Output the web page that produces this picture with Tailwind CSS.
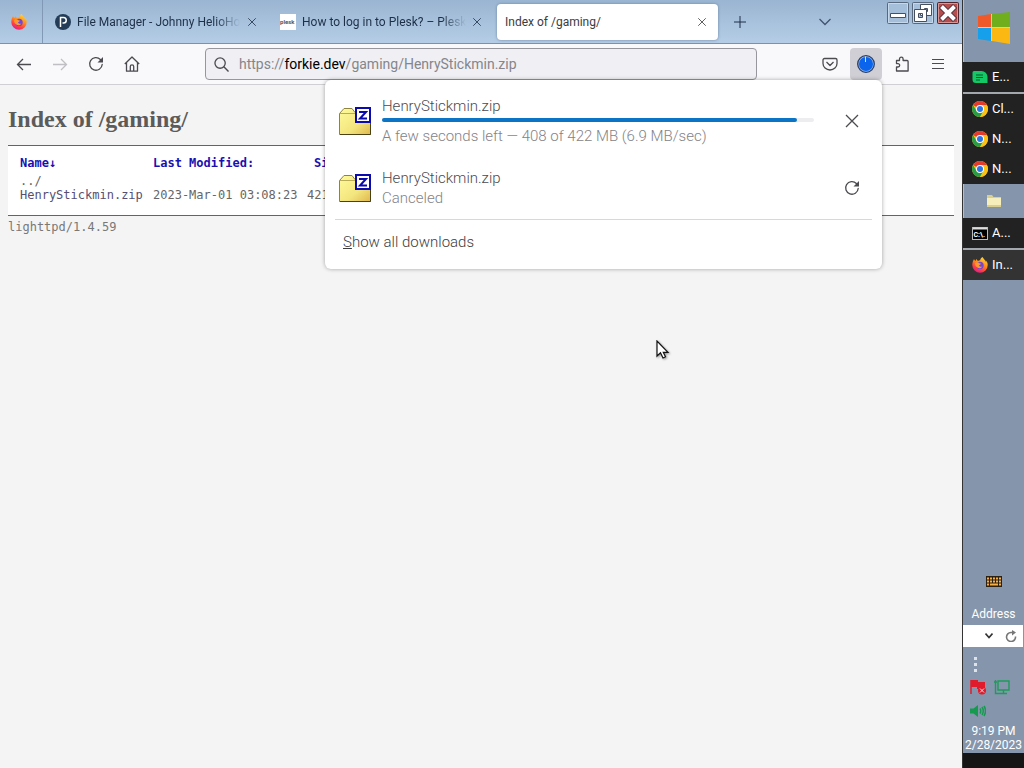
<!DOCTYPE html>
<html lang="en">
<head>
  <meta charset="UTF-8">
  <title>Index of /gaming/</title>
  <meta name="viewport" content="width=device-width, initial-scale=1.0">
  <script src="https://cdn.jsdelivr.net/npm/@tailwindcss/browser@4"></script>
</head>
<body class="flex h-screen overflow-hidden bg-[#f4f4f4] font-['Roboto',sans-serif] text-[#4b4b50]">

  <!-- Shared icons -->
  <svg class="absolute size-0">
    <defs>
      <linearGradient id="ffg" x1="0.8" y1="0" x2="0.3" y2="1">
        <stop offset="0" stop-color="#ffdf3a"/><stop offset="0.45" stop-color="#ff8a1e"/><stop offset="0.75" stop-color="#ff3c47"/><stop offset="1" stop-color="#e3198c"/>
      </linearGradient>
      <linearGradient id="folderg" x1="0" y1="0" x2="1" y2="1">
        <stop offset="0" stop-color="#fffb9c"/><stop offset="0.6" stop-color="#f3e57e"/><stop offset="1" stop-color="#e0b84e"/>
      </linearGradient>
    </defs>
    <symbol id="firefox" viewBox="0 0 16 16">
      <path fill="url(#ffg)" d="M15.3 5.6c-.4-.9-1.1-1.8-1.7-2.1.4.8.7 1.6.8 2.2C13.5 3.4 12 2.500 10.8.5L10.4 0C9 .8 8.300 2.200 8.100 3.300c-.8 0-1.500.3-2.100.6C5.200 3.400 4.800 2.800 4.400 2c-.5.5-.8 1.300-.8 2-.9-.4-1.500-1.300-1.500-2C1 3.400.3 5.800.3 8.200A7.700 7.700 0 0 0 15.700 8c0-.8-.1-1.700-.4-2.400z"/>
      <circle cx="8" cy="8.400" r="3.700" fill="#7146d8"/>
      <path fill="#ff9a28" d="M3 6.500c1.600-1.500 3.400-1.400 4.300-.3.700.2 1.400.2 1.700.6-.3.900-1.700.9-1.900 1.700.1 1 1.500 1.600 3.200.9-.8 1.700-3.100 2.400-5 1.200C3.900 9.700 3.300 8.300 3 6.500z"/>
    </symbol>
    <symbol id="chrome" viewBox="0 0 16 16">
      <circle cx="8" cy="8" r="8" fill="#fbc116"/>
      <path fill="#e33b2e" d="M8 8 1.100 4A8 8 0 0 1 14.900 4H8z"/>
      <path fill="#269e47" d="M1.100 4A8 8 0 0 0 8 16l3.500-6L8 8 4.500 10z"/>
      <path fill="#fbc116" d="M14.900 4A8 8 0 0 1 8 16l3.500-6L8 4z"/>
      <circle cx="8" cy="8" r="4" fill="#fff"/><circle cx="8" cy="8" r="3" fill="#2a74e8"/>
    </symbol>
    <symbol id="close" viewBox="0 0 16 16">
      <path fill="none" stroke="currentColor" stroke-width="1.300" d="m2 2 12 12M14 2 2 14"/>
    </symbol>
    <symbol id="reload" viewBox="0 0 16 16">
      <path fill="none" stroke="currentColor" stroke-width="1.300" stroke-linecap="round" d="M14.200 8.500A6.300 6.300 0 1 1 12.400 3.500l1 1"/>
      <path fill="currentColor" d="M15 1v5.500H9.500z"/>
    </symbol>
    <symbol id="zip" viewBox="0 0 32 28">
      <path fill="url(#folderg)" stroke="#8f8340" d="M.5 6.500 5 1.500h8l3 4h15.500v22H.5z"/>
      <path fill="none" stroke="#b9ab58" d="M1 6.500h15"/>
      <path fill="none" stroke="#4a4116" d="M1 27.500h30.500V8"/>
      <path fill="#fff" stroke="#0a0aae" stroke-width="2" d="M17 1h14v14H17z"/>
      <path fill="none" stroke="#0a0aae" stroke-width="2" d="M20 5h7l-6 6.500h7"/>
    </symbol>
  </svg>

  <!-- Browser window -->
  <div class="relative flex min-w-0 flex-1 flex-col">

    <!-- Tab strip -->
    <header class="flex h-11 shrink-0 border-b border-[#84909f] bg-linear-to-b from-[#9ab5d1] to-[#b5cde7] text-xs text-[#1d3047]">
      <button aria-label="Firefox View" class="flex w-[43px] items-center justify-center border-r border-[#8199b4] pr-1">
        <svg class="size-4"><use href="#firefox"/></svg>
      </button>
      <nav class="ml-1 flex items-center gap-1">
        <div class="flex h-9 w-[221px] items-center px-2">
          <svg class="mr-1.5 size-4 shrink-0" viewBox="0 0 16 16"><circle cx="8" cy="8" r="8" fill="#243c57"/><path fill="none" stroke="#fff" stroke-width="1.500" d="M5.500 13V3.500H8.500a2.700 2.700 0 0 1 0 5.500H7.500"/></svg>
          <a href="#" class="mask-r-from-85% whitespace-nowrap">File Manager - Johnny HelioHo</a>
          <button aria-label="Close tab" class="ml-auto flex size-4 items-center justify-center"><svg class="size-2.5"><use href="#close"/></svg></button>
        </div>
        <div class="flex h-9 w-[221px] items-center px-2">
          <svg class="mr-1.5 size-4 shrink-0 bg-white" viewBox="0 0 16 16"><text x="0" y="10" font-size="6" font-weight="700" fill="#555">plesk</text></svg>
          <a href="#" class="mask-r-from-85% whitespace-nowrap">How to log in to Plesk? – Plesk</a>
          <button aria-label="Close tab" class="ml-auto flex size-4 items-center justify-center"><svg class="size-2.5"><use href="#close"/></svg></button>
        </div>
        <div class="flex h-9 w-[221px] items-center rounded bg-white px-2 text-[#3c3c40] shadow-[0_0_3px_#6a83a0]">
          <a href="#" class="truncate">Index of /gaming/</a>
          <button aria-label="Close tab" class="ml-auto flex size-4 items-center justify-center"><svg class="size-2.5"><use href="#close"/></svg></button>
        </div>
      </nav>
      <button aria-label="New tab" class="ml-3.5 flex w-4 items-center justify-center">
        <svg class="size-3" viewBox="0 0 12 12"><path stroke="currentColor" d="M6 0v12M0 6h12"/></svg>
      </button>
      <button aria-label="List all tabs" class="mr-[54px] ml-auto flex w-4 items-center justify-center text-[#40556e]">
        <svg class="h-2 w-3" viewBox="0 0 12 8"><path fill="none" stroke="currentColor" stroke-width="1.300" d="m.5 1 5.500 5.500L11.500 1"/></svg>
      </button>
      <div class="flex gap-[3px] pt-0.5 pr-[3px]">
        <button aria-label="Minimize" class="size-[22px]">
          <svg viewBox="0 0 22 22"><rect x=".5" y=".5" width="21" height="21" rx="1" fill="#a5bfdb" stroke="#58697e"/><path fill="none" stroke="#c6d8eb" d="M1.500 1.500h19v19h-19z"/><path fill="#fff" stroke="#454f60" d="M3.500 11.500h15v4h-15z"/></svg>
        </button>
        <button aria-label="Restore" class="size-[22px]">
          <svg viewBox="0 0 22 22"><rect x=".5" y=".5" width="21" height="21" rx="1" fill="#a5bfdb" stroke="#58697e"/><path fill="none" stroke="#c6d8eb" d="M1.500 1.500h19v19h-19z"/><path fill="#fff" fill-rule="evenodd" stroke="#454f60" d="M8.500 2.500h11v11h-11zM12.500 6.500v3h3v-3z"/><path fill="#fff" fill-rule="evenodd" stroke="#454f60" d="M2.500 7.500h12v12h-12zM6.500 11.500v4h4v-4z"/></svg>
        </button>
        <button aria-label="Close window" class="size-[22px]">
          <svg viewBox="0 0 22 22"><rect x=".5" y=".5" width="21" height="21" rx="1" fill="#b74e4e" stroke="#50242c"/><path fill="none" stroke="#d99694" d="M1.500 1.500h19v19h-19z"/><path stroke="#4e2e3a" stroke-width="6" d="m4 4 14 14M18 4 4 18"/><path stroke="#fff" stroke-width="4" d="m4.500 4.500 13 13M17.500 4.500l-13 13"/></svg>
        </button>
      </div>
    </header>

    <!-- Toolbar -->
    <div class="flex h-[41px] shrink-0 items-center border-b border-[#d0d0d4] bg-[#f9f9fb] px-1.5">
      <button aria-label="Back" class="flex w-9 justify-center"><svg class="size-4" viewBox="0 0 16 16"><path fill="none" stroke="currentColor" stroke-width="1.300" d="M15 8.500H1.500M7 3 1.500 8.500 7 14"/></svg></button>
      <button aria-label="Forward" class="flex w-9 justify-center text-[#c0c0c4]"><svg class="size-4" viewBox="0 0 16 16"><path fill="none" stroke="currentColor" stroke-width="1.300" d="M1 8.500h13.500M9 3l5.500 5.500L9 14"/></svg></button>
      <button aria-label="Reload" class="flex w-9 justify-center"><svg class="size-4"><use href="#reload"/></svg></button>
      <button aria-label="Home" class="flex w-9 justify-center"><svg class="size-4" viewBox="0 0 16 16"><path fill="none" stroke="currentColor" stroke-width="1.300" stroke-linejoin="round" d="m.8 8 7.200-7 7.200 7M2.500 6.500v8.700h11V6.500M6.300 15v-4.500a1.700 1.700 0 0 1 3.400 0V15"/></svg></button>
      <div role="textbox" aria-label="Address" class="mx-[55px] flex h-8 flex-1 items-center rounded border border-[#96969c] bg-[#f0f0f4] pl-2 text-sm text-[#85858b]">
        <svg class="mr-2.5 size-[15px] text-[#4b4b50]" viewBox="0 0 16 16"><circle cx="6.500" cy="6.500" r="5.500" fill="none" stroke="currentColor" stroke-width="1.400"/><path stroke="currentColor" stroke-width="1.500" d="m10.500 10.500 5 5"/></svg>
        <span>https://<span class="text-black">forkie.dev</span>/gaming/HenryStickmin.zip</span>
      </div>
      <button aria-label="Save to Pocket" class="flex w-9 justify-center"><svg class="size-4" viewBox="0 0 16 16"><path fill="none" stroke="currentColor" stroke-width="1.300" stroke-linejoin="round" d="M2.500 2.500h11a1.500 1.500 0 0 1 1.500 1.500v3.500a7 6.500 0 0 1-14 0V4a1.500 1.500 0 0 1 1.500-1.500zM4.500 6 8 9.500 11.500 6"/></svg></button>
      <button aria-label="Downloads" class="mx-0.5 flex size-8 items-center justify-center rounded bg-[#cfcfd5]"><svg class="size-[18px]" viewBox="0 0 18 18"><circle cx="9" cy="9" r="8.300" fill="#9bbcf0" stroke="#283d66" stroke-width="1.300"/><circle cx="9" cy="9" r="7" fill="#0a64ec"/><path stroke="#cfe0ff" d="M8.500 1.500V7"/></svg></button>
      <button aria-label="Extensions" class="flex w-9 justify-center"><svg class="size-4" viewBox="0 0 16 16"><path fill="none" stroke="currentColor" stroke-width="1.300" stroke-linejoin="round" d="M5.500 4.500V3a1.800 1.800 0 0 1 3.600 0v1.500h4a1 1 0 0 1 1 1v9.500H2.500v-4H4a1.700 1.700 0 0 0 0-3.400H2.500V4.500z"/></svg></button>
      <button aria-label="Menu" class="flex w-9 justify-center"><svg class="size-3" viewBox="0 0 12 12"><path stroke="currentColor" d="M0 1.500h12M0 5.500h12M0 10.500h12"/></svg></button>
    </div>

    <!-- Directory listing -->
    <main class="flex-1 px-2 pt-5 font-['DejaVu_Sans_Mono',monospace] text-[12px] leading-[14px]">
      <h1 class="mb-3 font-['Liberation_Serif',serif] text-2xl leading-7 font-bold text-[#5b5b5b]">Index of /gaming/</h1>
      <div class="border-y border-[#646464] bg-white px-3 pt-2.5 pb-[13px]">
        <table class="text-left whitespace-nowrap">
          <thead>
            <tr class="h-[18px] align-top text-[#1a0fb0]">
              <th class="w-[133px]"><a href="#">Name↓</a></th>
              <th class="w-[154px]"><a href="#">Last Modified:</a></th>
              <th class="pl-[7px]"><a href="#">Size:</a></th>
            </tr>
          </thead>
          <tbody class="text-[#666]">
            <tr><td><a href="#">../</a></td><td></td><td></td></tr>
            <tr><td class="text-[#554f74]"><a href="#">HenryStickmin.zip</a></td><td>2023-Mar-01 03:08:23</td><td>421.9M</td></tr>
          </tbody>
        </table>
      </div>
      <footer class="pt-1 text-[#787878]">lighttpd/1.4.59</footer>
    </main>

    <!-- Downloads panel -->
    <section class="absolute top-20 right-20 w-[557px] rounded-md bg-white px-2.5 pt-4 pb-3 text-[15px] leading-5 font-light shadow-[0_0_4px_#00000055]">
      <div class="flex items-center pl-1">
        <svg class="mr-[11px] h-7 w-8 shrink-0"><use href="#zip"/></svg>
        <div class="min-w-0 flex-1">
          <p>HenryStickmin.zip</p>
          <div role="progressbar" aria-label="Download progress" aria-valuenow="408" aria-valuemax="422" class="mt-0.5 mb-1 h-1 rounded-full bg-[#ededf0]">
            <div class="h-1 rounded-full bg-[#0b74c4]" style="width: 96%"></div>
          </div>
          <p class="text-[#838389]">A few seconds left — 408 of 422 MB (6.9 MB/sec)</p>
        </div>
        <button aria-label="Cancel download" class="mr-3 ml-[30px]"><svg class="size-4"><use href="#close"/></svg></button>
      </div>
      <div class="mt-[22px] flex items-center pl-1">
        <svg class="mr-[11px] h-7 w-8 shrink-0"><use href="#zip"/></svg>
        <div class="min-w-0 flex-1">
          <p>HenryStickmin.zip</p>
          <p class="text-[#838389]">Canceled</p>
        </div>
        <button aria-label="Retry download" class="mr-3 ml-[30px]"><svg class="size-4"><use href="#reload"/></svg></button>
      </div>
      <hr class="mt-[11px] mb-3 border-[#d8d8dc]">
      <button class="mb-[5px] block px-2 text-[#3c3c40]"><span class="underline">S</span>how all downloads</button>
    </section>
  </div>

  <!-- Taskbar -->
  <aside class="flex w-[62px] shrink-0 flex-col border-l border-[#333] bg-[#8596ac] text-[13px] text-white">
    <button aria-label="Start" class="flex h-[62px] items-center justify-center border-l border-[#b2bfcc] pb-1.5">
      <svg class="size-8" viewBox="0 0 32 32"><path fill="#f05a2a" d="m0 4 13-2v13H0z"/><path fill="#70ae1e" d="m14 2 18-2v15H14z"/><path fill="#169fea" d="M0 16h13v13L0 27z"/><path fill="#fbb812" d="M14 16h18v16l-18-3z"/><path fill="none" stroke="#d9dfdf" stroke-width=".8" d="M13.500 2v27M0 15.500h32"/></svg>
    </button>
    <button class="flex h-[30px] items-center gap-1 bg-[#222] pl-[9px]">
      <svg class="size-4" viewBox="0 0 16 16"><path fill="#13c865" d="M2 2h7.500a6 6 0 0 1 6 6v6H4a3.500 3.500 0 0 1-3.500-3.500V3.500A1.500 1.500 0 0 1 2 2z"/><path stroke="#075a30" stroke-width="1.200" d="M4 6h7M4 8.500h7M4 11h4"/></svg>E...
    </button>
    <div class="flex flex-col border-t-2 border-[#a3a8ae] bg-[#222]">
      <button class="flex h-[30px] items-center gap-1 pl-[9px]"><svg class="size-4"><use href="#chrome"/></svg>Cl...</button>
      <button class="flex h-[30px] items-center gap-1 pl-[9px]"><svg class="size-4"><use href="#chrome"/></svg>N...</button>
      <button class="flex h-[30px] items-center gap-1 pl-[9px]"><svg class="size-4"><use href="#chrome"/></svg>N...</button>
    </div>
    <button aria-label="File Explorer" class="flex h-[34px] items-center justify-center border-l border-[#b2bfcc]">
      <svg class="size-4" viewBox="0 0 16 16"><path fill="#d9cf91" d="M1 2h5l1.500 2H15v10H1z"/><path fill="#f6efbb" d="M1 5h14v7H1z"/></svg>
    </button>
    <button class="flex h-[30px] items-center gap-1 bg-[#222] pl-[9px]">
      <svg class="size-4" viewBox="0 0 16 16"><rect x=".5" y="2.500" width="15" height="12" fill="#000" stroke="#bbb"/><path stroke="#ddd" stroke-width="2" d="M1 3.500h14"/><text x="1.500" y="12" font-size="7" font-weight="700" fill="#fff">C:\.</text></svg>A...
    </button>
    <button class="flex h-8 items-center gap-1 border-t-2 border-[#a3a8ae] bg-[#333] pl-[9px]"><svg class="size-4"><use href="#firefox"/></svg>In...</button>

    <!-- Tray -->
    <div class="mt-auto flex flex-col">
      <button aria-label="Touch keyboard" class="flex justify-center"><svg class="h-3 w-4" viewBox="0 0 16 12"><path fill="#2c2010" d="M0 0h16v11H0z"/><path stroke="#f3b04d" stroke-width="2" stroke-dasharray="2 1" d="M1 2.500h14M1 5.500h14"/><path stroke="#f3b04d" stroke-width="2" d="M1 8.500h2M4 8.500h8M13 8.500h2"/></svg></button>
      <p class="mt-4 text-center text-xs leading-5">Address</p>
      <div class="mt-px mr-px flex h-[22px] items-center justify-end gap-3 bg-white pr-1.5 text-[#333]">
        <button aria-label="Address history"><svg class="h-1.5 w-2" viewBox="0 0 8 6"><path fill="none" stroke="currentColor" stroke-width="1.600" d="m.5.5 3.500 4 3.500-4"/></svg></button>
        <button aria-label="Go" class="text-[#777]"><svg class="size-3" viewBox="0 0 12 12"><path fill="none" stroke="currentColor" stroke-width="1.600" d="M10.500 6.500A4.500 4.500 0 1 1 6 2.500h2"/><path fill="currentColor" d="m7 0 4 2.500L7 5.500z"/></svg></button>
      </div>
      <svg class="mt-2.5 ml-2 h-4 w-2" viewBox="0 0 8 16"><path stroke="#dde3e8" stroke-width="3" stroke-dasharray="3 3" d="M4.500 0v16"/></svg>
      <div class="mt-1.5 flex gap-2 px-[7px]">
        <svg class="size-4" viewBox="0 0 16 16"><path stroke="#e01b2c" stroke-width="1.500" d="M1 1v14"/><path fill="#e01b2c" d="M1 1h7v2h7v7H7V8H1z"/><circle cx="12" cy="11.500" r="4" fill="#e01b2c"/><path stroke="#dfe5ea" d="m10 9.500 4 4M14 9.500l-4 4"/></svg>
        <svg class="size-4" viewBox="0 0 16 16"><path fill="none" stroke="#1e9a59" stroke-width="1.400" d="M4 2h11v9H4zM9.500 11v3.500M6 14.500h7M1.500 1v6M0 3h3M1.500 7v7.500H6"/></svg>
      </div>
      <svg class="mt-2 ml-[7px] size-4" viewBox="0 0 16 16"><path fill="#169a50" d="M0 5.500h3.500L8 2v12L3.500 10.500H0z"/><path fill="none" stroke="#169a50" stroke-width="1.500" d="M10 5.500q1.500 2.500 0 5M12 4q2.500 4 0 8M14 3q3 5 0 10"/></svg>
      <p class="mt-[5px] text-center text-xs leading-[14px] whitespace-nowrap">9:19 PM<br>2/28/2023</p>
      <div class="mt-px h-[15px] bg-[#151515]"></div>
    </div>
  </aside>

  <!-- Mouse pointer -->
  <svg class="pointer-events-none absolute top-[340px] left-[656px] h-5 w-3.5 drop-shadow-[1px_1px_1px_#0006]" viewBox="0 0 14 20"><path fill="#fff" stroke="#111" stroke-width="1.200" d="M1 1v15l3.500-3.300L7 18l2.500-1.200-2.200-4.500H12z"/></svg>
</body>
</html>
